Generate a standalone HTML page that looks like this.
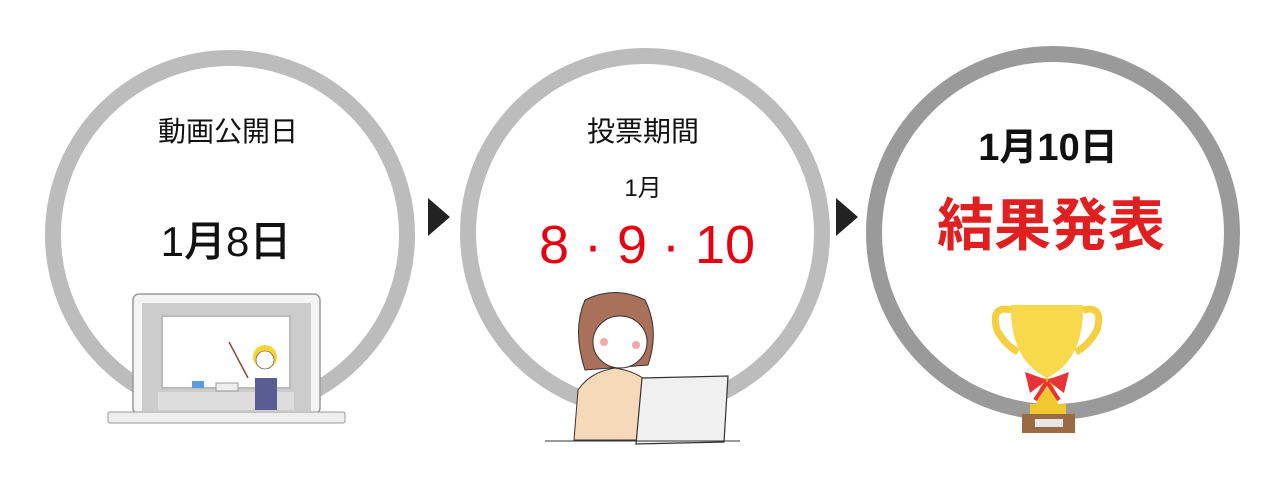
<!DOCTYPE html>
<html><head><meta charset="utf-8"><style>
body{margin:0;background:#fff;width:1280px;height:484px;overflow:hidden}
svg{display:block}
text{font-family:"Liberation Sans","Noto Sans CJK JP",sans-serif}
</style></head><body>
<svg width="1280" height="484" viewBox="0 0 1280 484">
<circle cx="230" cy="235" r="177" fill="none" stroke="#bcbcbc" stroke-width="16"/>
<circle cx="645" cy="233" r="177" fill="none" stroke="#bcbcbc" stroke-width="16"/>
<circle cx="1053" cy="233" r="179" fill="none" stroke="#9a9a9a" stroke-width="16"/>
<polygon points="428,198 450,217 428,236" fill="#222"/>
<polygon points="836,198 858,217 836,236" fill="#222"/>
<text x="228" y="141" font-size="28" text-anchor="middle" fill="#111">動画公開日</text>
<text x="226" y="256" font-size="42" text-anchor="middle" fill="#111" font-weight="500">1月8日</text>
<text x="643" y="141" font-size="28" text-anchor="middle" fill="#111">投票期間</text>
<text x="643" y="196" font-size="24" text-anchor="middle" fill="#111">1月</text>
<text x="647" y="263" font-size="54" text-anchor="middle" fill="#e60012" font-weight="500">8 · 9 · 10</text>
<text x="1048" y="160" font-size="38" text-anchor="middle" fill="#111" font-weight="bold">1月10日</text>
<text x="1051" y="245" font-size="57" text-anchor="middle" fill="#e02020" font-weight="bold">結果発表</text>
<!-- laptop 1 -->
<rect x="133" y="294" width="187" height="120" rx="6" fill="#f4f4f4" stroke="#999" stroke-width="1.5"/>
<rect x="142" y="303" width="169" height="108" fill="#ccc"/>
<rect x="162" y="316" width="128" height="72" fill="#fff" stroke="#bbb" stroke-width="2"/>
<rect x="158" y="392" width="136" height="18" fill="#ddd"/>
<rect x="192" y="381" width="12" height="7" fill="#5b9ee0"/>
<rect x="216" y="383" width="22" height="8" fill="#eee" stroke="#999"/>
<line x1="229" y1="342" x2="248" y2="378" stroke="#8a4a3a" stroke-width="1.5"/>
<path d="M255 378 L277 378 L277 410 L255 410Z" fill="#5a5c94"/>
<circle cx="265" cy="357" r="12" fill="#f7d43a"/>
<circle cx="265" cy="360" r="9" fill="#fff" stroke="#444" stroke-width=".6"/>
<rect x="108" y="412" width="237" height="11" rx="2" fill="#eee" stroke="#999"/>
<!-- woman -->
<path d="M585 300 Q615 285 645 300 Q660 330 648 365 L585 370 Q572 330 585 300Z" fill="#a9705a" stroke="#333" stroke-width="1"/>
<ellipse cx="620" cy="342" rx="27" ry="26" fill="#fff" stroke="#333" stroke-width="1"/>
<path d="M590 318 Q615 300 645 322 Q640 305 620 300 Q595 302 590 318Z" fill="#a9705a"/>
<circle cx="604" cy="342" r="4" fill="#f4a8a8"/><circle cx="636" cy="345" r="4" fill="#f4a8a8"/>
<path d="M574 440 L578 390 Q590 372 615 368 Q640 372 650 385 L645 440Z" fill="#f6d9b8" stroke="#333" stroke-width="1"/>
<path d="M642 378 L728 376 L724 442 L636 444Z" fill="#f0f0f0" stroke="#333" stroke-width="1.2"/>
<line x1="545" y1="441" x2="740" y2="441" stroke="#333" stroke-width="1"/>
<!-- trophy -->
<path d="M1011 305 L1083 305 Q1084 360 1047 378 Q1010 360 1011 305Z" fill="#f7d94b"/>
<path d="M1011 310 Q990 305 997 330 Q1005 345 1018 352" fill="none" stroke="#f4d040" stroke-width="7"/>
<path d="M1083 310 Q1104 305 1097 330 Q1089 345 1076 352" fill="none" stroke="#f4d040" stroke-width="7"/>
<path d="M1042 378 L1052 378 L1058 404 L1036 404Z" fill="#f0c830"/>
<path d="M1047 380 L1025 372 L1030 393Z M1047 380 L1069 372 L1064 393Z" fill="#e8323a"/>
<path d="M1047 382 L1035 400 M1047 382 L1059 400" stroke="#e8323a" stroke-width="4"/>
<rect x="1022" y="414" width="53" height="19" fill="#9a6a45"/>
<rect x="1035" y="419" width="28" height="8" fill="#e6e6e6"/>
<rect x="1030" y="404" width="36" height="10" fill="#f0c830"/>
</svg>
</body></html>
